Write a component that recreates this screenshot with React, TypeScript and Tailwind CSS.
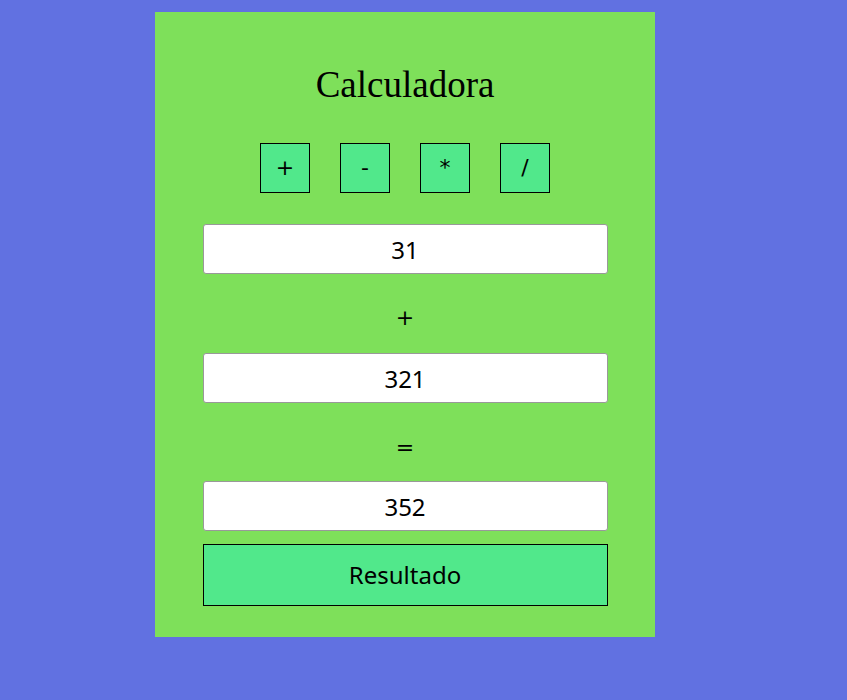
import React from 'react';

const ops = ['+', '-', '*', '/'];

export default function App() {
    const uiFont = { fontFamily: '"Noto Sans", "DejaVu Sans", sans-serif' };
    const symFont = { fontFamily: '"DejaVu Sans", "Noto Sans", sans-serif' };
    return (
        <div className="min-h-screen w-full bg-[#6171e1] pt-[12px]">
            <div
                className="ml-[155px] w-[500px] h-[625px] bg-[#7ee05a] flex flex-col items-center text-black"
                style={uiFont}
            >
                <h1
                    className="mt-[52px] text-[37px] leading-[42px]"
                    style={{ fontFamily: '"Liberation Serif", "Times New Roman", serif' }}
                >
                    Calculadora
                </h1>

                <div className="mt-[37px] flex gap-[30px]">
                    {ops.map((op) => (
                        <button
                            key={op}
                            className="w-[50px] h-[50px] border border-black bg-[#51e88b] text-[22px] leading-none flex items-center justify-center"
                            style={symFont}
                        >
                            {op}
                        </button>
                    ))}
                </div>

                <input
                    readOnly
                    value="31"
                    className="mt-[31px] w-[405px] h-[50px] bg-white border border-[#999999] rounded-[3px] text-center text-[24px] outline-none"
                />
                <div className="h-[79px] pt-[8px] flex items-center text-[22px]" style={symFont}>+</div>
                <input
                    readOnly
                    value="321"
                    className="w-[405px] h-[50px] bg-white border border-[#999999] rounded-[3px] text-center text-[24px] outline-none"
                />
                <div className="h-[78px] pt-[10px] flex items-center text-[22px]" style={symFont}>=</div>
                <input
                    readOnly
                    value="352"
                    className="w-[405px] h-[50px] bg-white border border-[#999999] rounded-[3px] text-center text-[24px] outline-none"
                />

                <button className="mt-[13px] w-[405px] h-[62px] border border-black bg-[#51e88b] text-[24px]">
                    Resultado
                </button>
            </div>
        </div>
    );
}
